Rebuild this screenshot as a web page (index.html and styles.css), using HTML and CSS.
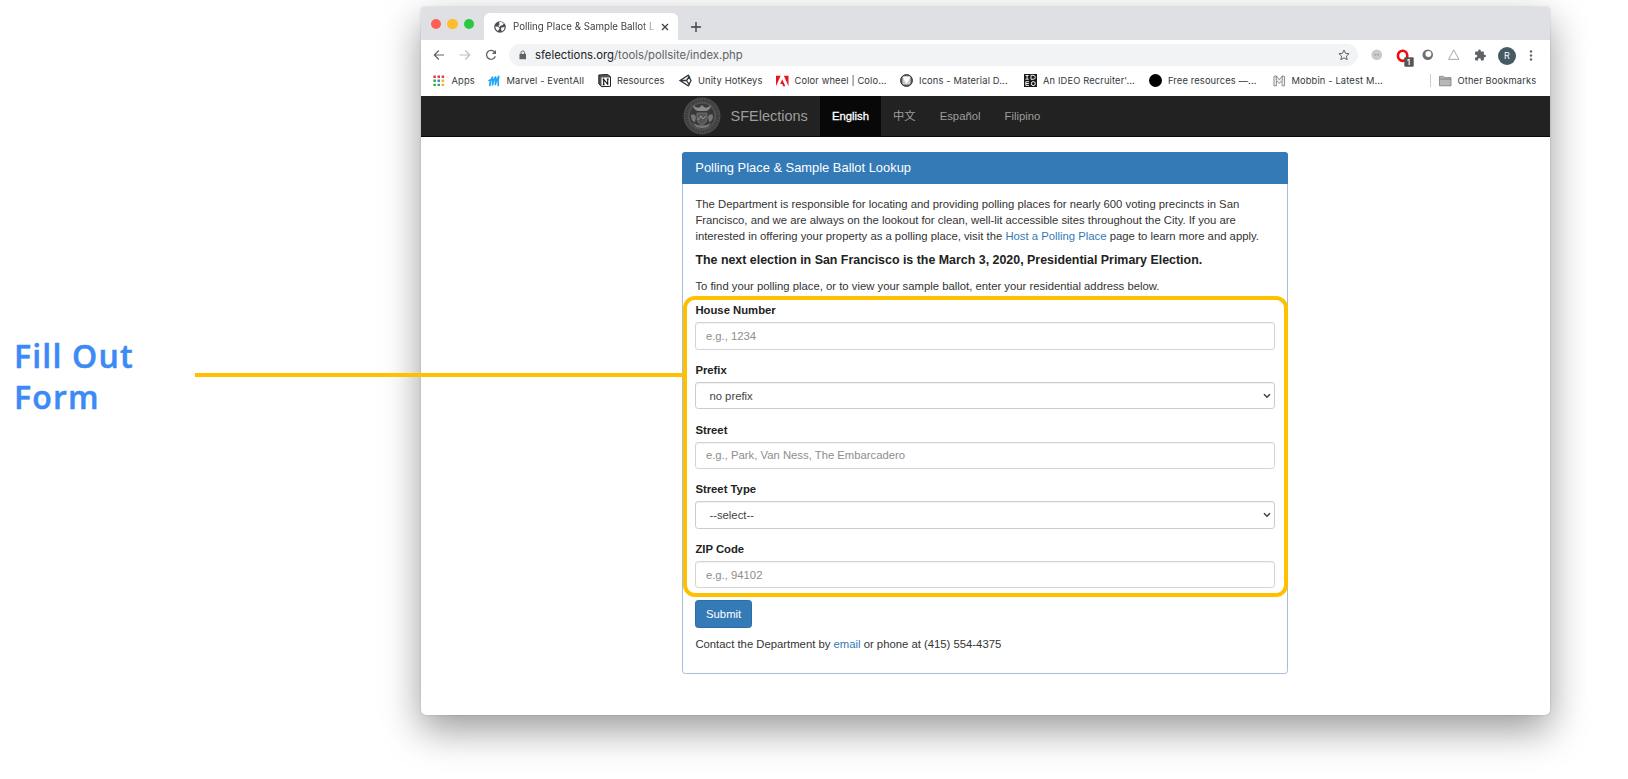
FILE: index.html
```html
<!DOCTYPE html>
<html lang="en">
<head>
<meta charset="utf-8">
<title>Polling Place &amp; Sample Ballot Lookup</title>
<link rel="stylesheet" href="styles.css">
</head>
<body>
<aside class="callout">Fill Out<br>Form</aside>
<main class="window">
  <header class="tabs">
    <div class="lights"><i class="red"></i><i class="yellow"></i><i class="green"></i></div>
    <div class="tab">
      <svg class="globe" viewBox="0 0 12 12"><circle cx="6" cy="6" r="5.8" fill="#4a4e54"/><path d="M1.200 5.500 4 5.700l1.500 1.200-.3 1.300-1.400 1.900-1.800-1.900zM5 1.300 7.500 1l2.300 1.500-1.300 1.700-1.900.2-1 1.500-1.400-.8 1.300-1.300zM7 6.700l3.700-.6-.7 2.400-2 1.900-.7-1.500z" fill="#fff"/></svg>
      <span class="tab-title">Polling Place &amp; Sample Ballot L</span>
      <svg class="close" viewBox="0 0 8 8"><path d="M1 1l6 6M7 1 1 7" stroke="#3c4043" stroke-width="1.3"/></svg>
    </div>
    <svg class="plus" viewBox="0 0 10 10"><path d="M5 0v10M0 5h10" stroke="#3c4043" stroke-width="1.4"/></svg>
  </header>
  <div class="toolbar">
    <svg class="nav-ic" viewBox="0 0 12 12"><path d="M11 6H1.500M5.800 1.500 1.300 6l4.500 4.500" fill="none" stroke="#5f6368" stroke-width="1.200"/></svg>
    <svg class="nav-ic" viewBox="0 0 12 12"><path d="M.5 6h10M6.200 1.500 10.700 6l-4.500 4.500" fill="none" stroke="#bcbec1" stroke-width="1.200"/></svg>
    <svg class="nav-ic" viewBox="0 0 12 12"><path d="M9.700 3.200A4.500 4.500 0 1 0 10.300 7.200" fill="none" stroke="#5f6368" stroke-width="1.300"/><path d="M11 .9v4.200H6.800z" fill="#5f6368"/></svg>
    <div class="omnibox">
      <svg class="lock" viewBox="0 0 8 10"><path d="M.5 3.8h7v5.7h-7z" fill="#5f6368"/><path d="M2.1 4V2.6a1.9 1.9 0 0 1 3.8 0V4" fill="none" stroke="#5f6368" stroke-width="1"/></svg>
      <span class="url"><b>sfelections.org</b>/tools/pollsite/index.php</span>
      <svg class="star" viewBox="0 0 12 12"><path d="m6 1 1.500 3.300 3.600.4-2.700 2.400.8 3.600L6 8.800l-3.200 1.900.8-3.600L.9 4.700l3.600-.4z" fill="none" stroke="#5f6368"/></svg>
    </div>
    <div class="extensions">
      <svg viewBox="0 0 12 12"><circle cx="6" cy="6" r="5.600" fill="#cacaca"/><path d="M3.500 6h2M6.500 6h2" stroke="#888" stroke-width=".9"/></svg>
      <svg class="opera" viewBox="0 0 18 18"><ellipse cx="6.600" cy="6.800" rx="4.700" ry="5.100" fill="none" stroke="#f00c12" stroke-width="2.600"/><rect x="8.300" y="8.300" width="9.400" height="9.400" rx="1" fill="#555"/><text x="11" y="16" class="badge">1</text></svg>
      <svg viewBox="0 0 12 12"><circle cx="6" cy="6" r="5.500" fill="#707070"/><circle cx="6.700" cy="5.200" r="3.100" fill="#fff"/></svg>
      <svg viewBox="0 0 12 12"><path d="M6 1 11.400 10.800H.6z" fill="none" stroke="#9a9a9a" stroke-width=".9"/></svg>
      <svg class="puzzle" viewBox="0 0 24 24"><path d="M20.500 11H19V7c0-1.100-.9-2-2-2h-4V3.500a2.500 2.500 0 0 0-5 0V5H4c-1.100 0-2 .9-2 2v3.800h1.500a2.700 2.700 0 0 1 0 5.400H2V20c0 1.100.9 2 2 2h3.800v-1.500a2.700 2.700 0 0 1 5.400 0V22H17c1.100 0 2-.9 2-2v-4h1.500a2.500 2.500 0 0 0 0-5z" fill="#5f6368"/></svg>
      <span class="avatar">R</span>
      <svg class="dots" viewBox="0 0 4 12"><circle cx="2" cy="1.600" r="1.300"/><circle cx="2" cy="6" r="1.300"/><circle cx="2" cy="10.400" r="1.300"/></svg>
    </div>
  </div>
  <nav class="bookmarks">
    <a class="bm apps"><svg viewBox="0 0 12 12"><path d="M.4.4h2.600v2.600H.4zM4.700.4h2.600v2.600H4.700zM9 .4h2.600v2.600H9z" fill="#ea3d2f"/><path d="M.4 4.700h2.600v2.600H.4z" fill="#34a853"/><path d="M4.700 4.700h2.600v2.600H4.700z" fill="#3b82f0"/><path d="M9 4.700h2.600v2.600H9zM9 9h2.600v2.600H9z" fill="#f4b02a"/><path d="M.4 9h2.600v2.600H.4zM4.700 9h2.600v2.600H4.700z" fill="#34a853"/></svg><span>Apps</span></a>
    <a class="bm marvel"><svg viewBox="0 0 12 12"><path d="M1.600 10.500Q1.500 6 4.200 2.200 4.600 5 4.300 10 4.800 5 7.300 2 7.600 5 7 9.500 8 4.500 10.500 1.500 9.500 5 10 10.300M.8 5.500 2.200 5" fill="none" stroke="#1fa8f5" stroke-width="1.700" stroke-linecap="round" stroke-linejoin="round"/></svg><span>Marvel - EventAll</span></a>
    <a class="bm resources"><svg viewBox="0 0 13 13"><path d="M.8 1 9.500.5l3 2.200v9.600l-9 .4-2.700-3z" fill="#555" stroke="#222"/><path d="M3.500 3.500h8.500v8.500H3.500z" fill="#fff"/><path d="M5.700 10.500V5.300l4 5V5M4.700 5.200h1.500M4.700 10.700h2M8.800 5h2" stroke="#111" stroke-width="1.100" fill="none"/></svg><span>Resources</span></a>
    <a class="bm unity"><svg viewBox="0 0 13 13"><path d="M1 6.500 9.300 1.200 12 6.500 9.300 11.800zM1 6.500h6.500M7.500 6.500 10.700 2M7.500 6.500l3.200 4.600" fill="none" stroke="#303640" stroke-width="1.300"/></svg><span>Unity HotKeys</span></a>
    <a class="bm color"><svg viewBox="0 0 13 12"><path d="M0 .5h4.800L0 11.500zM8.200.5H13v11zM6.500 4.300l3.200 7.200H7.500l-1-2.300H4.300z" fill="#e5161d"/></svg><span>Color wheel | Colo...</span></a>
    <a class="bm material"><svg viewBox="0 0 13 13"><circle cx="6.500" cy="6.500" r="6.200" fill="#666"/><path d="M2.500 2.500h8v8h-8z" fill="#ccc"/><path d="M2.500 2.500h8l-4 8z" fill="#fff"/><circle cx="6.500" cy="6.500" r="5.800" fill="none" stroke="#333"/></svg><span>Icons - Material D...</span></a>
    <a class="bm ideo"><svg viewBox="0 0 13 13"><path d="M0 0h13v13H0z" fill="#191919"/><path d="M1.500 1.500h3.200M3.100 1.500v3.700M1.500 5.200h3.200M7 1.300h2q2.300 0 2.300 2T9 5.300H7zM5 7.700H1.800v3.700H5M1.800 9.500h3" stroke="#fff" fill="none" stroke-width=".9"/><circle cx="9.300" cy="9.600" r="2" fill="none" stroke="#fff"/></svg><span>An IDEO Recruiter'...</span></a>
    <a class="bm free"><svg viewBox="0 0 13 13"><circle cx="6.500" cy="6.500" r="6.500"/></svg><span>Free resources —...</span></a>
    <a class="bm mobbin"><svg viewBox="0 0 12 12"><path d="M.7 1.500 3 .8l3 4 3-4 2.300.7v9.300H8.800V5.500L6 8.500l-2.800-3v5.300H.7zM3 1v4M9 1v4" fill="#eee" stroke="#777" stroke-width=".8"/></svg><span>Mobbin - Latest M...</span></a>
    <a class="bm other"><svg viewBox="0 0 13 11"><path d="M.5 10.500V.7h4.300L6 2h6.500v8.500z" fill="#b8b8b8" stroke="#777" stroke-width=".8"/><path d="M.5 3.500h12" stroke="#777" stroke-width=".8"/></svg><span>Other Bookmarks</span></a>
  </nav>
  <nav class="site-nav">
    <svg class="seal" viewBox="0 0 38 38"><circle cx="19" cy="19" r="18.500" fill="#4c4c4c"/><circle cx="19" cy="19" r="15.800" fill="none" stroke="#3a3a3a" stroke-width="3" stroke-dasharray="1.200 1.300"/><circle cx="19" cy="19" r="13" fill="#383838" stroke="#666" stroke-width=".6"/><path d="M10 8q4 4 7 2l2-2 2 2q3 2 7-2-1 6-6 6h-6q-5 0-6-6z" fill="#8a8a8a"/><path d="M14 16h10v6q0 4-5 6-5-2-5-6z" fill="#555" stroke="#888" stroke-width=".6"/><path d="M8 18q4-2 5 2l-1 5q-4 0-4-7zM30 18q-4-2-5 2l1 5q4 0 4-7zM10 26q9 5 18 0l-3 4q-6 2-12 0z" fill="#777"/><path d="M15 23l3-4 2 3 3-3" stroke="#999" fill="none"/></svg>
    <span class="brand">SFElections</span>
    <a class="lang active">English</a><a class="lang">中文</a><a class="lang">Español</a><a class="lang">Filipino</a>
  </nav>
  <section class="panel">
    <h1 class="panel-head">Polling Place &amp; Sample Ballot Lookup</h1>
    <div class="panel-body">
      <p>The Department is responsible for locating and providing polling places for nearly 600 voting precincts in San<br>Francisco, and we are always on the lookout for clean, well-lit accessible sites throughout the City. If you are<br>interested in offering your property as a polling place, visit the <a>Host a Polling Place</a> page to learn more and apply.</p>
      <p class="notice">The next election in San Francisco is the March 3, 2020, Presidential Primary Election.</p>
      <p>To find your polling place, or to view your sample ballot, enter your residential address below.</p>
      <form class="form">
        <div class="field"><label>House Number</label><div class="control hint">e.g., 1234</div></div>
        <div class="field"><label>Prefix</label><div class="control select">no prefix<svg viewBox="0 0 8 6"><path d="m1 1.200 3 3 3-3" fill="none" stroke="#444" stroke-width="1.600"/></svg></div></div>
        <div class="field"><label>Street</label><div class="control hint">e.g., Park, Van Ness, The Embarcadero</div></div>
        <div class="field"><label>Street Type</label><div class="control select">--select--<svg viewBox="0 0 8 6"><path d="m1 1.200 3 3 3-3" fill="none" stroke="#444" stroke-width="1.600"/></svg></div></div>
        <div class="field"><label>ZIP Code</label><div class="control hint">e.g., 94102</div></div>
      </form>
      <button class="submit" type="button">Submit</button>
      <p class="contact">Contact the Department by <a>email</a> or phone at (415) 554-4375</p>
    </div>
  </section>
</main>
<div class="connector"></div>
<div class="highlight"></div>
</body>
</html>
```

FILE: styles.css
```css
* { box-sizing: border-box; }
body { margin: 0; width: 1628px; height: 779px; overflow: hidden; position: relative; display: flex; background: #fff; font-family: "Liberation Sans", Arial, sans-serif; }
svg { display: block; flex: none; overflow: visible; }
.callout { width: 420.500px; flex: none; padding: 335px 0 0 14px; font: 600 32px/41px "Open Sans", sans-serif; letter-spacing: 1.200px; color: #3b8af5; -webkit-text-stroke: .5px #3b8af5; }
.window { width: 1129.500px; height: 708px; flex: none; margin-top: 7px; background: #fff; border-radius: 3px 3px 5px 5px; box-shadow: 0 15px 38px rgba(0,0,0,.4), 0 0 2px rgba(0,0,0,.18); }

.tabs { height: 33px; background: #dee0e4; border-radius: 3px 3px 0 0; display: flex; align-items: flex-end; font-family: Inter, sans-serif; }
.lights { display: flex; gap: 6px; align-self: center; padding: 1px 0 0 10.500px; width: 63px; }
.lights i { width: 10.300px; height: 10.300px; border-radius: 50%; flex: none; }
.red { background: #ff5f57; } .yellow { background: #febc2e; } .green { background: #28c840; }
.tab { width: 194px; height: 27px; background: #fff; border-radius: 6px 6px 0 0; display: flex; align-items: center; padding: 0 9px 0 10.500px; }
.globe { width: 12px; height: 12px; margin-right: 7px; }
.tab-title { width: 143px; margin-right: 4.500px; font-size: 9.750px; color: #3c4043; white-space: nowrap; -webkit-mask-image: linear-gradient(90deg, #000 90%, transparent 102%); mask-image: linear-gradient(90deg, #000 90%, transparent 102%); }
.close { width: 8px; height: 8px; }
.plus { width: 10px; height: 10px; margin: 0 0 8.500px 13px; }

.toolbar { height: 29px; display: flex; align-items: center; padding: 1px 0 0 12px; font-family: Inter, sans-serif; }
.nav-ic { width: 12px; height: 12px; margin-right: 14px; }
.omnibox { width: 849.500px; height: 22.500px; margin-left: -2px; border-radius: 12px; background: #f1f3f4; display: flex; align-items: center; padding: 0 8px 0 10.500px; }
.lock { width: 7.500px; height: 10px; margin-right: 8.500px; }
.url { flex: 1; font-size: 11.300px; color: #5f6368; }
.url b { font-weight: 400; color: #202124; }
.star { width: 12px; height: 12px; }
.extensions { display: flex; align-items: center; margin-left: 13px; gap: 14.500px; }
.extensions svg { width: 11.500px; height: 11.500px; }
.extensions .opera { width: 18px; height: 18px; margin: 5px -6.500px 0 -1px; }
.extensions .puzzle { width: 12.500px; height: 12.500px; }
.badge { font: 600 7.500px Inter, sans-serif; fill: #fff; }
.avatar { width: 18px; height: 18px; margin: 0 -2px -1px -3px; border-radius: 50%; background: #455a64; color: #fff; font-size: 9px; line-height: 18px; text-align: center; }
.extensions .dots { width: 4px; height: 11px; fill: #5f6368; }

.bookmarks { height: 27px; display: flex; align-items: center; padding: 0 12.500px 4px; font: 9.300px Inter, sans-serif; letter-spacing: .15px; color: #34373a; }
.bm { display: flex; align-items: center; gap: 6px; flex: none; white-space: nowrap; }
.bm svg { width: 12.500px; height: 12px; }
.bm.apps svg { width: 11.500px; height: 11.500px; }
.bm.apps { gap: 7px; }
.bm.resources svg, .bm.unity svg, .bm.material svg, .bm.ideo svg, .bm.free svg { width: 13px; height: 13px; }
.apps { width: 55px; } .marvel { width: 110px; } .resources { width: 81px; } .unity { width: 97px; }
.color { width: 124px; } .material { width: 124px; } .ideo { width: 125px; } .free { width: 124px; }
.mobbin { width: 157px; }
.other { border-left: 1px solid #ccc; padding-left: 8px; height: 13px; }

.site-nav { height: 41px; background: #222; border-bottom: 1px solid #080808; display: flex; align-items: center; padding-left: 262.500px; color: #9d9d9d; }
.seal { width: 38px; height: 38px; margin-right: 9.500px; }
.brand { width: 89.500px; font-size: 14.500px; white-space: nowrap; }
.lang { height: 40px; padding: 0 12px; font: 11.300px/41px "Liberation Sans", "Noto Sans CJK SC", sans-serif; }
.active { background: #080808; color: #fff; -webkit-text-stroke: .3px #fff; }

.panel { width: 605.400px; height: 522px; margin: 15px 0 0 261.800px; border: 1px solid #a4bedd; border-radius: 3.300px; font-size: 11.300px; line-height: 16.140px; color: #333; }
.panel-head { margin: -1px -1px 0; height: 32px; padding: 0 13px; font-size: 12.900px; line-height: 32px; font-weight: 400; color: #fff; background: #337ab7; border-radius: 3.300px 3.300px 0 0; }
.panel-body { padding: 11.800px 12.100px; white-space: nowrap; }
p { margin: 0 0 8.070px; }
a { color: #337ab7; }
.site-nav a { color: #9d9d9d; }
.site-nav .active { color: #fff; }
.bookmarks a { color: inherit; }
.notice { font-size: 12.420px; line-height: 17.700px; font-weight: 700; color: #222; }
.form { margin: 0; }
.field { padding-bottom: 12.100px; }
.field label { display: block; margin-bottom: 4px; font-weight: 700; color: #222; }
.control { height: 27.400px; border: 1px solid #ccc; border-radius: 3.200px; padding: 0 9.500px; line-height: 26px; color: #444; display: flex; justify-content: space-between; align-items: center; box-shadow: inset 0 1px 1px rgba(0,0,0,.06); }
.hint { color: #8e8e8e; border-color: #d4d4d4; }
.select { padding: 0 3px 0 13px; }
.select svg { width: 8px; height: 6px; }
.submit { display: block; width: 56.500px; height: 27.400px; border: 1px solid #2e6da4; border-radius: 3.200px; background: #337ab7; color: #fff; font: 11.300px/16px "Liberation Sans", sans-serif; padding: 0; margin-bottom: 8px; }

.connector { position: absolute; left: 195px; top: 373px; width: 490px; height: 4px; background: #ffc000; }
.highlight { position: absolute; left: 682.600px; top: 296px; width: 605.400px; height: 300.500px; border: 4px solid #ffc000; border-radius: 12px; }
```
